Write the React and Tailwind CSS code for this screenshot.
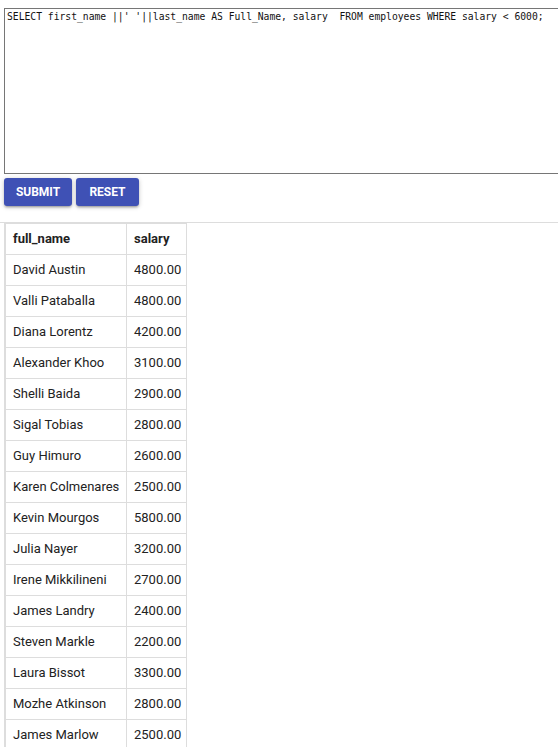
import React from "react";

const rows = [
  ["David Austin", "4800.00"],
  ["Valli Pataballa", "4800.00"],
  ["Diana Lorentz", "4200.00"],
  ["Alexander Khoo", "3100.00"],
  ["Shelli Baida", "2900.00"],
  ["Sigal Tobias", "2800.00"],
  ["Guy Himuro", "2600.00"],
  ["Karen Colmenares", "2500.00"],
  ["Kevin Mourgos", "5800.00"],
  ["Julia Nayer", "3200.00"],
  ["Irene Mikkilineni", "2700.00"],
  ["James Landry", "2400.00"],
  ["Steven Markle", "2200.00"],
  ["Laura Bissot", "3300.00"],
  ["Mozhe Atkinson", "2800.00"],
  ["James Marlow", "2500.00"],
];

const query =
  "SELECT first_name ||' '||last_name AS Full_Name, salary  FROM employees WHERE salary < 6000;";

export default function App() {
  return (
    <div className="w-screen h-screen overflow-hidden bg-white font-['Roboto',sans-serif] text-[#222]">
      <div className="pt-2 pl-1">
        <textarea
          defaultValue={query}
          spellCheck={false}
          className="block w-[620px] h-[166px] border border-[#767676] p-[2px] font-['DejaVu_Sans_Mono',monospace] text-[9.7px] leading-[12px] text-[#111] resize-none outline-none"
        />
        <div className="flex gap-1 mt-1">
          <button className="h-[28px] w-[68px] rounded-[3px] bg-[#3f51b5] text-white text-[12px] font-bold uppercase shadow-[0_1px_5px_rgba(0,0,0,0.2),0_2px_2px_rgba(0,0,0,0.14),0_3px_1px_-2px_rgba(0,0,0,0.12)]">
            Submit
          </button>
          <button className="h-[28px] w-[63px] rounded-[3px] bg-[#3f51b5] text-white text-[12px] font-bold uppercase shadow-[0_1px_5px_rgba(0,0,0,0.2),0_2px_2px_rgba(0,0,0,0.14),0_3px_1px_-2px_rgba(0,0,0,0.12)]">
            Reset
          </button>
        </div>
      </div>
      <div className="mt-4 border-t border-[#ddd]">
        <table className="ml-1 w-[183px] table-fixed border-separate border-spacing-0 text-[13px]">
          <thead>
            <tr>
              <th className="w-[123px] border-l-2 border-t border-r border-b border-[#ddd] px-[7px] py-[7px] leading-[16px] text-left font-bold">
                full_name
              </th>
              <th className="w-[60px] border-t border-r border-b border-[#ddd] pl-[7px] pr-[4px] py-[7px] leading-[16px] text-left font-bold">
                salary
              </th>
            </tr>
          </thead>
          <tbody>
            {rows.map(([name, salary]) => (
              <tr key={name}>
                <td className="border-l-2 border-r border-b border-[#ddd] px-[7px] py-[7px] leading-[16px] whitespace-nowrap">
                  {name}
                </td>
                <td className="border-r border-b border-[#ddd] pl-[7px] pr-[4px] py-[7px] leading-[16px] whitespace-nowrap">
                  {salary}
                </td>
              </tr>
            ))}
          </tbody>
        </table>
      </div>
    </div>
  );
}
